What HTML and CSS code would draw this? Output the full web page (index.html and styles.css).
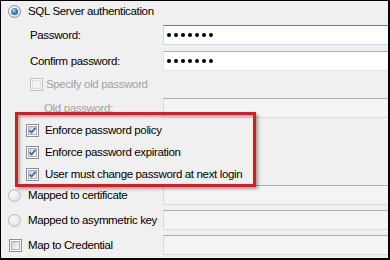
FILE: index.html
```html
<!DOCTYPE html>
<html>
<head>
<meta charset="utf-8">
<link rel="stylesheet" href="styles.css">
</head>
<body>
<div class="frame">
  <div class="row r1">
    <div class="cell pad-radio"><span class="radio on"></span><span class="lbl">SQL Server authentication</span></div>
    <div></div>
  </div>
  <div class="row r2">
    <div class="cell pad-field"><span class="lbl">Password:</span></div>
    <div class="box focus"><span class="dots"><i></i><i></i><i></i><i></i><i></i><i></i><i></i></span></div>
  </div>
  <div class="row r3">
    <div class="cell pad-field"><span class="lbl">Confirm password:</span></div>
    <div class="box"><span class="dots"><i></i><i></i><i></i><i></i><i></i><i></i><i></i></span></div>
  </div>
  <div class="row r4">
    <div class="cell pad-old"><span class="cb disabled"></span><span class="lbl dis">Specify old password</span></div>
    <div></div>
  </div>
  <div class="row r5">
    <div class="cell pad-oldlbl"><span class="lbl dis">Old password:</span></div>
    <div class="box off"></div>
  </div>
  <div class="row r6 tall">
    <div class="cell pad-enf"><span class="cb checked"><svg viewBox="0 0 13 13" width="13" height="13"><path d="M3.6 6.4 L5.6 8.6 L9.6 3.8" /></svg></span><span class="lbl">Enforce password policy</span></div>
    <div></div>
  </div>
  <div class="row tall">
    <div class="cell pad-enf"><span class="cb checked"><svg viewBox="0 0 13 13" width="13" height="13"><path d="M3.6 6.4 L5.6 8.6 L9.6 3.8" /></svg></span><span class="lbl">Enforce password expiration</span></div>
    <div></div>
  </div>
  <div class="row tall">
    <div class="cell pad-enf"><span class="cb checked"><svg viewBox="0 0 13 13" width="13" height="13"><path d="M3.6 6.4 L5.6 8.6 L9.6 3.8" /></svg></span><span class="lbl">User must change password at next login</span></div>
    <div></div>
  </div>
  <div class="row r9">
    <div class="cell pad-radio"><span class="radio dim"></span><span class="lbl">Mapped to certificate</span></div>
    <div class="box off"></div>
  </div>
  <div class="row r10">
    <div class="cell pad-radio"><span class="radio dim"></span><span class="lbl">Mapped to asymmetric key</span></div>
    <div class="box off"></div>
  </div>
  <div class="row r11">
    <div class="cell pad-map"><span class="cb"></span><span class="lbl">Map to Credential</span></div>
    <div class="box off"></div>
  </div>
  <div class="highlight"></div>
</div>
</body>
</html>
```
FILE: styles.css
```css
html, body {
  margin: 0;
  padding: 0;
  background: #f0f0f0;
}
.frame {
  position: relative;
  width: 390px;
  height: 260px;
  box-sizing: border-box;
  border-style: solid;
  border-color: #000;
  border-width: 1px 2px 2px 1px;
  background: #f0f0f0;
  overflow: hidden;
  display: flex;
  flex-direction: column;
  font-family: "Liberation Sans", Arial, sans-serif;
  font-size: 11.5px;
  letter-spacing: -0.35px;
  color: #000;
}
.row {
  display: grid;
  grid-template-columns: 162px 240px;
  align-items: center;
  height: 20px;
  flex: none;
}
.row.tall { height: 22px; }
.r1 { margin-top: 0; }
.r2 { margin-top: 4px; }
.r3 { margin-top: 6px; }
.r4 { margin-top: 3px; }
.r5 { margin-top: 4px; }
.r6 { margin-top: 1px; }
.r9 { margin-top: 0; }
.r10 { margin-top: 5px; }
.r11 { margin-top: 5px; }
.cell {
  display: flex;
  align-items: center;
  height: 100%;
  white-space: nowrap;
}
.pad-radio { padding-left: 7px; gap: 7px; }
.pad-field { padding-left: 29px; }
.pad-old { padding-left: 29px; gap: 3px; }
.pad-oldlbl { padding-left: 43px; }
.pad-enf { padding-left: 25px; gap: 6px; }
.pad-map { padding-left: 8px; gap: 6px; }
.lbl { line-height: 14px; }
.lbl.dis { color: #a2a2a2; }

/* text boxes */
.box {
  height: 20px;
  box-sizing: border-box;
  background: #fff;
  border: 1px solid #e2e3ea;
  border-top-color: #abadb3;
  display: flex;
  align-items: center;
}
.box.focus {
  border-color: #c5daed;
  border-top-color: #5586b3;
}
.box.off {
  background: #f4f4f4;
  border-color: #dadada;
  border-top-color: #adadad;
}
.dots {
  display: flex;
  gap: 3px;
  padding-left: 3px;
}
.dots i {
  display: block;
  width: 4px;
  height: 4px;
  border-radius: 50%;
  background: #000;
}

/* radio buttons */
.radio {
  width: 13px;
  height: 13px;
  box-sizing: border-box;
  border-radius: 50%;
  border: 1px solid #8e8f8f;
  background: radial-gradient(circle at 35% 35%, #ffffff 0, #f0f0f0 45%, #d4d4d4 100%);
  position: relative;
  flex: none;
}
.radio.on::after {
  content: "";
  position: absolute;
  left: 2px;
  top: 2px;
  width: 7px;
  height: 7px;
  border-radius: 50%;
  background: radial-gradient(circle at 40% 35%, #a9dcf8 0, #3b84bf 45%, #16406b 100%);
}
.radio.dim {
  border-color: #bcbcbc;
  background: radial-gradient(circle at 35% 35%, #fbfbfb 0, #ececec 50%, #d8d8d8 100%);
}

/* checkboxes */
.cb {
  width: 13px;
  height: 13px;
  box-sizing: border-box;
  border: 1px solid #8e8f8f;
  background: #fdfdfd;
  position: relative;
  flex: none;
}
.cb::before {
  content: "";
  position: absolute;
  left: 1px;
  top: 1px;
  right: 1px;
  bottom: 1px;
  border: 1px solid #aeb2b8;
  background: linear-gradient(135deg, #cdd1d7 0, #e8ebee 60%, #f7f7f7 100%);
}
.cb.checked::before {
  border-color: #a4b1c5;
  background: linear-gradient(135deg, #c3cfe3 0, #e2e9f4 60%, #f6f8fb 100%);
}
.cb.disabled {
  border-color: #c3c3c3;
  background: #f4f4f4;
}
.cb.disabled::before {
  border-color: #e0e0e0;
  background: #f4f4f4;
}
.cb svg {
  position: absolute;
  left: -1px;
  top: -1px;
}
.cb svg path {
  fill: none;
  stroke: #46599a;
  stroke-width: 1.6;
}

/* annotation overlay */
.highlight {
  position: absolute;
  left: 14px;
  top: 111px;
  width: 241px;
  height: 75px;
  box-sizing: border-box;
  border: 3px solid #d41f22;
  box-shadow: 2px 2px 3px rgba(0, 0, 0, 0.35), inset 2px 2px 3px rgba(0, 0, 0, 0.3);
}
```
